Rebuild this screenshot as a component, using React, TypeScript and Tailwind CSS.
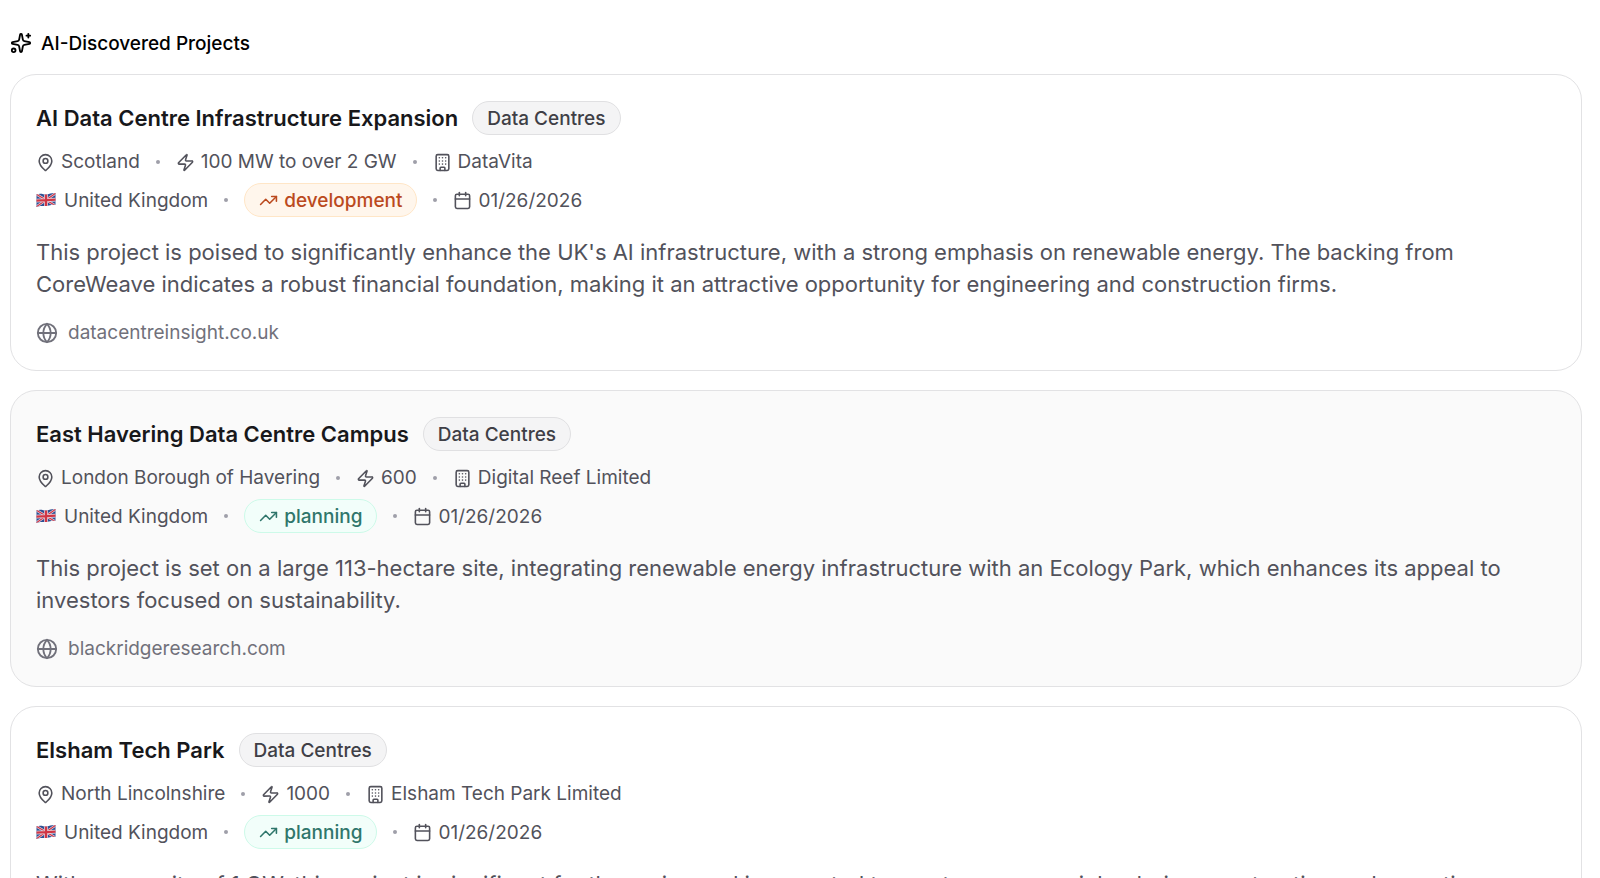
import React from "react";
import {
  Building,
  Calendar,
  Globe,
  MapPin,
  Sparkles,
  TrendingUp,
  Zap,
} from "lucide-react";
import { clsx } from "clsx";

type Project = {
  title: string;
  sector: string;
  location: string;
  capacity: string;
  developer: string;
  country: string;
  stage: "development" | "planning";
  date: string;
  summary: string;
  source: string;
};

const projects: Project[] = [
  {
    title: "AI Data Centre Infrastructure Expansion",
    sector: "Data Centres",
    location: "Scotland",
    capacity: "100 MW to over 2 GW",
    developer: "DataVita",
    country: "United Kingdom",
    stage: "development",
    date: "01/26/2026",
    summary:
      "This project is poised to significantly enhance the UK's AI infrastructure, with a strong emphasis on renewable energy. The backing from CoreWeave indicates a robust financial foundation, making it an attractive opportunity for engineering and construction firms.",
    source: "datacentreinsight.co.uk",
  },
  {
    title: "East Havering Data Centre Campus",
    sector: "Data Centres",
    location: "London Borough of Havering",
    capacity: "600",
    developer: "Digital Reef Limited",
    country: "United Kingdom",
    stage: "planning",
    date: "01/26/2026",
    summary:
      "This project is set on a large 113-hectare site, integrating renewable energy infrastructure with an Ecology Park, which enhances its appeal to investors focused on sustainability.",
    source: "blackridgeresearch.com",
  },
  {
    title: "Elsham Tech Park",
    sector: "Data Centres",
    location: "North Lincolnshire",
    capacity: "1000",
    developer: "Elsham Tech Park Limited",
    country: "United Kingdom",
    stage: "planning",
    date: "01/26/2026",
    summary:
      "With a capacity of 1 GW, this project is significant for the region and is expected to create numerous jobs during construction and operation.",
    source: "elshamtechpark.co.uk",
  },
];

const stageStyles = {
  development: "border-[#ffe6c7] bg-[#fff6ec] text-[#bb4a1e]",
  planning: "border-[#cdfae9] bg-[#f2fefa] text-[#2f766b]",
};

const App = () => {
  return (
    <main className="h-screen overflow-hidden bg-white pl-[10px] pr-[18px] pt-7 font-['Inter',sans-serif]">
      <h2 className="flex h-[30px] items-center gap-[9px] text-[19px] font-medium leading-[31px] text-black">
        <Sparkles className="size-[22px]" />
        AI-Discovered Projects
      </h2>

      <div className="mt-4 flex flex-col gap-[19px]">
        {projects.map((project, index) => (
          <ProjectCard
            key={project.title}
            project={project}
            highlighted={index === 1}
          />
        ))}
      </div>
    </main>
  );
};

const ProjectCard = ({
  project,
  highlighted,
}: {
  project: Project;
  highlighted: boolean;
}) => {
  return (
    <article
      className={clsx(
        "rounded-[26px] border border-[#e2e2e4] px-[25px] pb-[23px] pt-[26px]",
        highlighted ? "bg-[#fafafa]" : "bg-white"
      )}
    >
      <div className="flex items-center gap-[14px]">
        <h3 className="text-[22px] font-semibold leading-[34px] text-[#18181b]">
          {project.title}
        </h3>
        <span className="flex h-[34px] items-center rounded-full border border-[#e0e0e2] bg-[#f4f4f5] px-[14px] text-[19px] font-medium leading-[33px] text-[#3f3f46]">
          {project.sector}
        </span>
      </div>

      <div className="mt-3 flex h-[30px] items-center text-[19px] leading-[30px] text-[#52525b]">
        <span className="flex items-center gap-[6px]">
          <MapPin className="size-[19px]" />
          {project.location}
        </span>
        <Dot />
        <span className="flex items-center gap-[6px]">
          <Zap className="size-[19px]" />
          {project.capacity}
        </span>
        <Dot />
        <span className="flex items-center gap-[6px]">
          <Building className="size-[19px]" />
          {project.developer}
        </span>
      </div>

      <div className="mt-[6px] flex h-[34px] items-center text-[19px] leading-[33px] text-[#52525b]">
        <span className="flex items-center gap-2">
          <UnionJack />
          {project.country}
        </span>
        <Dot />
        <span
          className={clsx(
            "flex h-[34px] items-center gap-[6px] rounded-full border px-[14px] font-medium",
            stageStyles[project.stage]
          )}
        >
          <TrendingUp className="size-[19px]" />
          {project.stage}
        </span>
        <Dot />
        <span className="flex items-center gap-[6px]">
          <Calendar className="size-[19px]" />
          {project.date}
        </span>
      </div>

      <p className="mt-[19px] text-[22px] leading-8 text-[#52525b]">
        {project.summary}
      </p>

      <a
        href={`https://${project.source}`}
        className="mt-[18px] flex h-[29px] w-fit items-center gap-[10px] text-[19px] leading-[30px] text-[#71717b]"
      >
        <Globe className="size-[22px]" />
        {project.source}
      </a>
    </article>
  );
};

const Dot = () => (
  <span className="mx-4 size-1 rounded-full bg-[#9f9fa9]" aria-hidden="true" />
);

const UnionJack = () => (
  <svg viewBox="0 0 20 16" className="h-4 w-5" aria-hidden="true">
    <clipPath id="flag">
      <path d="M0.5 2.5C5 0.5 8 3 11 2.4C14 1.8 16 0.8 19.5 1.2V13C16 12.5 14 13.5 11 14C8 14.5 5 13 0.5 15Z" />
    </clipPath>
    <g clipPath="url(#flag)">
      <path d="M0 0H20V16H0Z" fill="#2d4f93" />
      <path d="M0 2L20 14M20 1L0 15" stroke="#e6dce6" strokeWidth="2.4" />
      <path d="M0 2L20 14M20 1L0 15" stroke="#d03645" strokeWidth="1.2" />
      <path d="M10 0V16M0 8.6L20 7.6" stroke="#e6dce6" strokeWidth="3.8" />
      <path d="M10 0V16M0 8.6L20 7.6" stroke="#d03645" strokeWidth="2.4" />
    </g>
  </svg>
);

export default App;
